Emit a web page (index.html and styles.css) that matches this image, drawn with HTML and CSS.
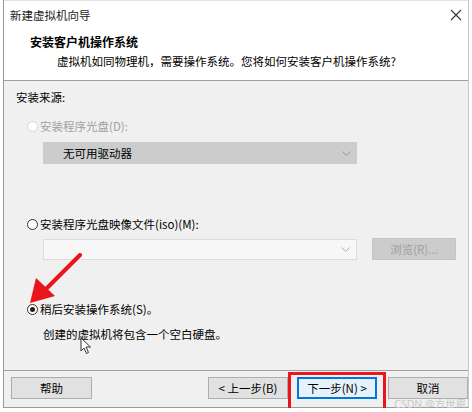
FILE: index.html
```html
<!DOCTYPE html>
<html lang="zh-CN">
<head>
    <meta charset="UTF-8">
    <meta name="viewport" content="width=device-width, initial-scale=1.0">
    <title>新建虚拟机向导</title>
    <link rel="stylesheet" href="styles.css">
</head>
<body>
    <div class="window">
        <div class="titlebar">
            <span class="title">新建虚拟机向导</span>
            <svg class="close" width="12" height="12" viewBox="0 0 12 12">
                <path d="M1 1 L11 11 M11 1 L1 11" stroke="#333" stroke-width="1.1" fill="none"/>
            </svg>
        </div>

        <div class="header">
            <div class="header-title">安装客户机操作系统</div>
            <div class="header-sub">虚拟机如同物理机，需要操作系统。您将如何安装客户机操作系统?</div>
        </div>

        <div class="content">
            <div class="section-label">安装来源:</div>

            <div class="option disabled">
                <span class="radio"></span>
                <span>安装程序光盘(D):</span>
            </div>
            <div class="select disabled-select">
                <span>无可用驱动器</span>
                <svg class="chevron" width="9" height="5" viewBox="0 0 9 5">
                    <path d="M0.5 0.5 L4.5 4.5 L8.5 0.5" stroke="#999" fill="none"/>
                </svg>
            </div>

            <div class="option iso-option">
                <span class="radio"></span>
                <span>安装程序光盘映像文件(iso)(M):</span>
            </div>
            <div class="iso-row">
                <div class="select iso-input">
                    <span></span>
                    <svg class="chevron" width="9" height="5" viewBox="0 0 9 5">
                        <path d="M0.5 0.5 L4.5 4.5 L8.5 0.5" stroke="#aaa" fill="none"/>
                    </svg>
                </div>
                <div class="btn btn-disabled">浏览(R)...</div>
            </div>

            <div class="option later-option">
                <span class="radio checked"></span>
                <span>稍后安装操作系统(S)。</span>
            </div>
            <div class="note">创建的虚拟机将包含一个空白硬盘。</div>

            <!-- annotation arrow -->
            <svg class="arrow" width="58" height="52" viewBox="0 0 58 52">
                <path d="M52 2 L16 38" stroke="#e8161b" stroke-width="4" stroke-linecap="round"/>
                <path d="M2 50 L8 25 L27 43 Z" fill="#e8161b"/>
            </svg>
            <svg class="cursor" width="12" height="18" viewBox="0 0 12 18">
                <path d="M1 1 L1 14 L4 11 L6.5 16.5 L8.5 15.5 L6 10 L10.5 10 Z" fill="#fff" stroke="#333" stroke-width="1"/>
            </svg>
        </div>

        <div class="footer">
            <div class="btn btn-help">帮助</div>
            <div class="nav">
                <div class="btn">&lt; 上一步(B)</div>
                <div class="btn btn-default">下一步(N) &gt;</div>
                <div class="btn">取消</div>
            </div>
            <div class="highlight"></div>
            <div class="watermark">CSDN @方世恩</div>
        </div>
    </div>
</body>
</html>
```

FILE: styles.css
```css
body {
    margin: 0;
    padding: 0;
    background-color: #ffffff;
    font-family: "Microsoft YaHei", "Noto Sans CJK SC", "Noto Sans", sans-serif;
    font-size: 11.5px;
    color: #000000;
}

.window {
    position: relative;
    margin-left: 3px;
    width: 466px;
    height: 408px;
    border-left: 1px solid #9a9a9a;
    border-right: 1px solid #c8c8c8;
    border-bottom: 1px solid #9a9a9a;
    display: flex;
    flex-direction: column;
    box-sizing: border-box;
}

.titlebar {
    height: 30px;
    background: #ffffff;
    display: flex;
    align-items: center;
    justify-content: space-between;
    padding: 0 8px 2px 6px;
    border-top: 1px solid #e4e4e4;
    box-sizing: border-box;
}

.title {
    color: #222;
}

.close {
    margin-right: -2px;
}

.header {
    height: 51px;
    background: #ffffff;
    border-bottom: 1px solid #a0a0a0;
    box-sizing: border-box;
    padding: 4px 0 0 26px;
}

.header-title {
    font-weight: bold;
    font-size: 12px;
    line-height: 16px;
}

.header-sub {
    padding-left: 27px;
    margin-top: 3px;
    line-height: 16px;
}

.content {
    position: relative;
    flex: 1;
    background: #f0f0f0;
    padding: 8px 0 0 12px;
}

.section-label {
    line-height: 16px;
}

.option {
    display: flex;
    align-items: center;
    gap: 2px;
    line-height: 16px;
    margin-left: 11px;
    margin-top: 13px;
}

.option.disabled {
    color: #a0a0a0;
}

.radio {
    width: 11px;
    height: 11px;
    border: 1px solid #333;
    border-radius: 50%;
    background: #ffffff;
    position: relative;
    box-sizing: border-box;
}

.disabled .radio {
    border-color: #d6d6d6;
}

.radio.checked::after {
    content: "";
    position: absolute;
    left: 2px;
    top: 2px;
    width: 5px;
    height: 5px;
    border-radius: 50%;
    background: #222;
}

.select {
    display: flex;
    align-items: center;
    justify-content: space-between;
    box-sizing: border-box;
}

.disabled-select {
    margin: 8px 0 0 27px;
    width: 314px;
    height: 22px;
    background: #cccccc;
    padding: 0 6px 0 20px;
}

.iso-option {
    margin-top: 52px;
}

.iso-row {
    display: flex;
    align-items: center;
    margin: 6px 0 0 27px;
}

.iso-input {
    width: 314px;
    height: 21px;
    background: #f7f7f7;
    border: 1px solid #dcdcdc;
    padding: 0 6px 0 6px;
}

.btn {
    height: 22px;
    width: 80px;
    box-sizing: border-box;
    border: 1px solid #adadad;
    background: #e1e1e1;
    display: flex;
    align-items: center;
    justify-content: center;
}

.btn-disabled {
    margin-left: 15px;
    width: 84px;
    background: #cccccc;
    border-color: #c4c4c4;
    color: #a0a0a0;
}

.later-option {
    margin-top: 41px;
}

.note {
    margin: 9px 0 0 27px;
    line-height: 16px;
}

.arrow {
    position: absolute;
    left: 24px;
    top: 172px;
}

.cursor {
    position: absolute;
    left: 76px;
    top: 256px;
}

.footer {
    position: relative;
    height: 37px;
    border-top: 1px solid #a0a0a0;
    background: #f0f0f0;
    display: flex;
    align-items: flex-start;
    justify-content: space-between;
    padding: 6px 0 0 7px;
    box-sizing: border-box;
}

.btn-help {
    width: 81px;
}

.nav {
    display: flex;
    gap: 9px;
}

.nav .btn:last-child {
    margin-left: 2px;
}

.btn-default {
    border: 2px solid #0078d7;
    background: #e5f1fb;
}

.highlight {
    position: absolute;
    left: 284px;
    top: 1px;
    width: 98px;
    height: 40px;
    border: 3px solid #e8161b;
    box-sizing: border-box;
}

.watermark {
    position: absolute;
    right: 2px;
    bottom: -4px;
    font-size: 10.5px;
    line-height: 13px;
    color: #c8c8c8;
    font-family: "Noto Sans", "Noto Sans CJK SC", sans-serif;
}
```
